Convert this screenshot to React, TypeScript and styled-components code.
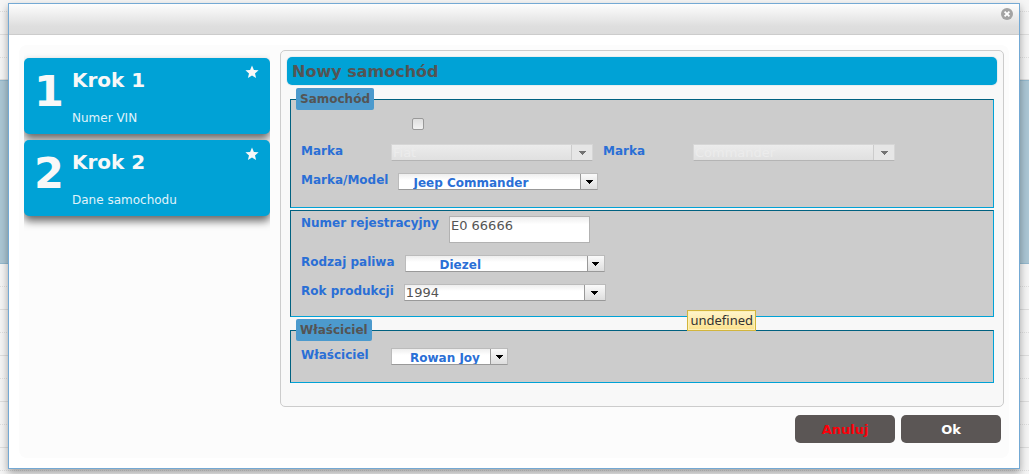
import React, { useId, useState } from "react";
import styled, { createGlobalStyle, css } from "styled-components";

const GlobalStyle = createGlobalStyle`
  *, *::before, *::after { box-sizing: border-box; }
  body {
    margin: 0;
    background: #f5f5f5;
    font-family: "DejaVu Sans", Verdana, sans-serif;
    font-size: 12px;
    color: #545454;
  }
  button, input, select { font: inherit; margin: 0; }
`;

const Page = styled.div`
  display: grid;
  min-height: 100vh;
`;

const Backdrop = styled.div`
  grid-area: 1 / 1;
  overflow: hidden;
`;

const BackdropRow = styled.div<{ $line: "solid" | "dotted"; $height?: number }>`
  height: ${(p) => p.$height ?? 23}px;
  border-bottom: 1px ${(p) => p.$line} #dedede;
`;

const SelectedRow = styled.div`
  height: 184px;
  background: #abc6d4;
  border: solid #93b8cd;
  border-width: 1px 0;
`;

const Dialog = styled.div`
  grid-area: 1 / 1;
  align-self: start;
  margin: 3px 9px 5px 8px;
  background: #fff;
  border: 1px solid #74a9d4;
  box-shadow: 0 4px 8px rgba(0, 0, 0, 0.35);
`;

const TitleBar = styled.header`
  display: flex;
  justify-content: flex-end;
  height: 31px;
  padding: 4px 6px;
  background: linear-gradient(#fdfdfd, #dedede 75%, #dcdcdc);
  border-bottom: 1px solid #ccc;
`;

const CloseButton = styled.button`
  display: block;
  width: 12px;
  height: 12px;
  padding: 0;
  border: 0;
  background: none;
  cursor: pointer;
  svg { display: block; }
`;

const Body = styled.div`
  margin: 10px;
  padding: 5px 5px 15px;
  border-radius: 8px;
  background: #fcfcfc;
`;

const Columns = styled.div`
  display: flex;
  gap: 10px;
`;

const Steps = styled.nav`
  display: flex;
  flex-direction: column;
  gap: 6px;
  flex: 0 0 246px;
  padding-top: 8px;
  overflow: hidden;
`;

const StepCard = styled.button`
  display: flex;
  align-items: stretch;
  height: 76px;
  padding: 10px 11px 8px 10px;
  border: 0;
  border-radius: 5px;
  background: #00a2d6;
  box-shadow: 0 5px 8px rgba(0, 0, 0, 0.6);
  color: #f8f8f8;
  text-align: left;
  cursor: pointer;
  svg { flex: none; margin-left: auto; margin-top: -3px; }
`;

const StepNumber = styled.span`
  width: 38px;
  font-size: 43px;
  line-height: 46px;
  font-weight: bold;
`;

const StepText = styled.span`
  display: flex;
  flex-direction: column;
  justify-content: space-between;
`;

const StepTitle = styled.span`
  font-size: 20px;
  line-height: 24px;
  font-weight: bold;
`;

const StepInfo = styled.span`
  line-height: 16px;
  color: #e0f3fa;
`;

const Panel = styled.main`
  position: relative;
  flex: 1;
  min-width: 0;
  display: flex;
  flex-direction: column;
  gap: 2px;
  padding: 6px 6px 23px;
  border: 1px solid #ccc;
  border-radius: 5px;
  background: #f8f8f8;
`;

const PanelTitle = styled.h1`
  margin: 0 0 1px;
  padding: 1px 5px 0;
  border-radius: 5px;
  box-shadow: 0 0 0 1px #e8eef0;
  background: #00a2d6;
  color: #545454;
  font-size: 16px;
  line-height: 27px;
`;

const Group = styled.fieldset`
  min-width: 0;
  margin: 0 3px;
  padding: 0 5px;
  border: 1px solid;
  border-color: #006180 #00a2d6 #00a2d6 #006180;
  background: #ccc;
`;

const Legend = styled.legend`
  padding: 1px 4px 0;
  border-radius: 2px;
  background: #4c9acd;
  font-weight: bold;
  line-height: 21px;
`;

const Fields = styled.div<{ $top: number; $bottom: number }>`
  display: flex;
  flex-direction: column;
  gap: 12px;
  padding: ${(p) => p.$top}px 5px ${(p) => p.$bottom}px;
`;

const Row = styled.div`
  display: flex;
  align-items: flex-start;
  gap: 10px;
`;

const CheckRow = styled(Row)`
  height: 14px;
  padding-left: 111px;
`;

const Label = styled.label`
  min-width: 80px;
  color: #2a6fd6;
  font-weight: bold;
  line-height: 14px;
  white-space: nowrap;
`;

const Check = styled.input`
  appearance: none;
  width: 12px;
  height: 12px;
  border: 1px solid #999;
  border-radius: 2px;
  background: linear-gradient(#dedede, #f2f2f2);
  &:checked { background: #2a6fd6; }
`;

type Look = "plain" | "muted" | "strong";

const ComboBox = styled.span<{ $width: number; $arrow: number; $look: Look }>`
  display: grid;
  grid-template-columns: 1fr ${(p) => p.$arrow}px;
  width: ${(p) => p.$width}px;
  height: 17px;
  border: 1px solid #bbb;
  border-bottom-color: #999;
  background: linear-gradient(#eee, #fff 40%);
  ${(p) =>
    p.$look === "muted" &&
    css`
      border-color: #d6d6d6 #d6d6d6 #b4b4b4;
      background: linear-gradient(#ececec, #e0e0e0);
    `}
`;

const Select = styled.select<{ $look: Look; $indent: number }>`
  grid-area: 1 / 1 / 2 / 3;
  appearance: none;
  min-width: 0;
  height: 15px;
  padding: 0 0 0 ${(p) => p.$indent}px;
  border: 0;
  background: none;
  color: #545454;
  font-size: 13px;
  line-height: 15px;
  opacity: 1;
  ${(p) => p.$look === "muted" && css`color: #ececec;`}
  ${(p) =>
    p.$look === "strong" &&
    css`
      padding-top: 2px;
      color: #2a6fd6;
      font-size: 12px;
      font-weight: bold;
    `}
`;

const Arrow = styled.span<{ $look: Look }>`
  grid-area: 1 / 2;
  display: grid;
  place-items: center;
  border-left: 1px solid ${(p) => (p.$look === "muted" ? "#ccc" : "#999")};
  background: ${(p) => (p.$look === "muted" ? "#e6e6e6" : "linear-gradient(#fafafa, #dedede)")};
  color: ${(p) => (p.$look === "muted" ? "#737373" : "#000")};
  pointer-events: none;
`;

const TextInput = styled.input`
  width: 141px;
  height: 27px;
  padding: 0 0 8px 1px;
  border: 1px solid #b2b2b2;
  background: linear-gradient(#eee, #fff 30%);
  color: #545454;
  font-size: 13px;
  line-height: 16px;
`;

const Tooltip = styled.div`
  position: absolute;
  top: 259px;
  right: 247px;
  padding: 0 2px;
  border: 1px solid #d2b53c;
  background: linear-gradient(#fff5cc, #fbe28e);
  box-shadow: inset 0 0 0 1px #fdf0b8;
  color: #323232;
  font: 13px / 19px "Noto Sans", "Open Sans", sans-serif;
`;

const Actions = styled.footer`
  display: flex;
  justify-content: flex-end;
  gap: 6px;
  margin: 8px 3px 0 0;
`;

const ActionButton = styled.button<{ $danger?: boolean }>`
  width: 100px;
  height: 28px;
  padding: 0;
  border: 0;
  border-radius: 5px;
  background: #5b5655;
  color: ${(p) => (p.$danger ? "#fb0009" : "#fff")};
  font-size: 13px;
  font-weight: bold;
  cursor: pointer;
`;

function Star() {
  return (
    <svg width="14" height="14" viewBox="0 0 14 14" aria-hidden="true">
      <path
        d="M7 .5 8.9 4.9 13.6 5.3 10 8.4 11.1 13.1 7 10.6 2.9 13.1 4 8.4 .4 5.3 5.1 4.9Z"
        fill="#f8f8f8"
      />
    </svg>
  );
}

function Step({ number, title, info }: { number: number; title: string; info: string }) {
  return (
    <StepCard type="button">
      <StepNumber>{number}</StepNumber>
      <StepText>
        <StepTitle>{title}</StepTitle>
        <StepInfo>{info}</StepInfo>
      </StepText>
      <Star />
    </StepCard>
  );
}

type ComboProps = {
  label: string;
  value: string;
  width: number;
  look?: Look;
  arrow?: number;
  indent?: number;
};

function Combo({ label, value, width, look = "strong", arrow = 17, indent = 1 }: ComboProps) {
  const id = useId();
  return (
    <>
      <Label htmlFor={id}>{label}</Label>
      <ComboBox $width={width} $arrow={arrow} $look={look}>
        <Arrow $look={look}>
          <svg width="7" height="4" viewBox="0 0 7 4" shapeRendering="crispEdges" aria-hidden="true">
            <path d="M0 0H7V1H6V2H5V3H4V4H3V3H2V2H1V1H0Z" fill="currentColor" />
          </svg>
        </Arrow>
        <Select id={id} $look={look} $indent={indent} disabled={look === "muted"}>
          <option>{value}</option>
        </Select>
      </ComboBox>
    </>
  );
}

export default function App() {
  const [plate, setPlate] = useState("E0 66666");
  return (
    <Page>
      <GlobalStyle />
      <Backdrop aria-hidden="true">
        <BackdropRow $line="dotted" $height={12} />
        <BackdropRow $line="solid" />
        <BackdropRow $line="dotted" />
        <BackdropRow $line="solid" $height={22} />
        <SelectedRow />
        {Array.from({ length: 9 }, (_, i) => (
          <BackdropRow key={i} $line={i % 2 ? "solid" : "dotted"} />
        ))}
      </Backdrop>

      <Dialog role="dialog" aria-labelledby="dialog-title">
        <TitleBar>
          <CloseButton type="button" aria-label="Zamknij">
            <svg width="12" height="12" viewBox="0 0 12 12" aria-hidden="true">
              <circle cx="6" cy="6" r="6" fill="#a3a3a3" />
              <path d="M3.6 3.6 8.4 8.4M8.4 3.6 3.6 8.4" stroke="#fff" strokeWidth="1.8" />
            </svg>
          </CloseButton>
        </TitleBar>

        <Body>
          <Columns>
            <Steps>
              <Step number={1} title="Krok 1" info="Numer VIN" />
              <Step number={2} title="Krok 2" info="Dane samochodu" />
            </Steps>

            <Panel>
              <PanelTitle id="dialog-title">Nowy samochód</PanelTitle>

              <Group>
                <Legend>Samochód</Legend>
                <Fields $top={8} $bottom={17}>
                  <CheckRow>
                    <Check type="checkbox" aria-label="Samochód" />
                  </CheckRow>
                  <Row>
                    <Combo label="Marka" value="Fiat" width={202} look="muted" arrow={21} />
                    <Combo label="Marka" value="Commander" width={202} look="muted" arrow={21} />
                  </Row>
                  <Row>
                    <Combo label="Marka/Model" value="Jeep Commander" width={200} indent={14} />
                  </Row>
                </Fields>
              </Group>

              <Group>
                <Fields $top={5} $bottom={15}>
                  <Row>
                    <Label htmlFor="plate">Numer rejestracyjny</Label>
                    <TextInput id="plate" value={plate} onChange={(e) => setPlate(e.target.value)} />
                  </Row>
                  <Row>
                    <Combo label="Rodzaj paliwa" value="Diezel" width={200} indent={34} />
                  </Row>
                  <Row>
                    <Combo label="Rok produkcji" value="1994" width={202} look="plain" arrow={21} />
                  </Row>
                </Fields>
              </Group>

              <Group>
                <Legend>Właściciel</Legend>
                <Fields $top={7} $bottom={17}>
                  <Row>
                    <Combo label="Właściciel" value="Rowan Joy" width={117} indent={18} />
                  </Row>
                </Fields>
              </Group>

              <Tooltip role="tooltip">undefined</Tooltip>
            </Panel>
          </Columns>

          <Actions>
            <ActionButton type="button" $danger>
              Anuluj
            </ActionButton>
            <ActionButton type="button">Ok</ActionButton>
          </Actions>
        </Body>
      </Dialog>
    </Page>
  );
}
